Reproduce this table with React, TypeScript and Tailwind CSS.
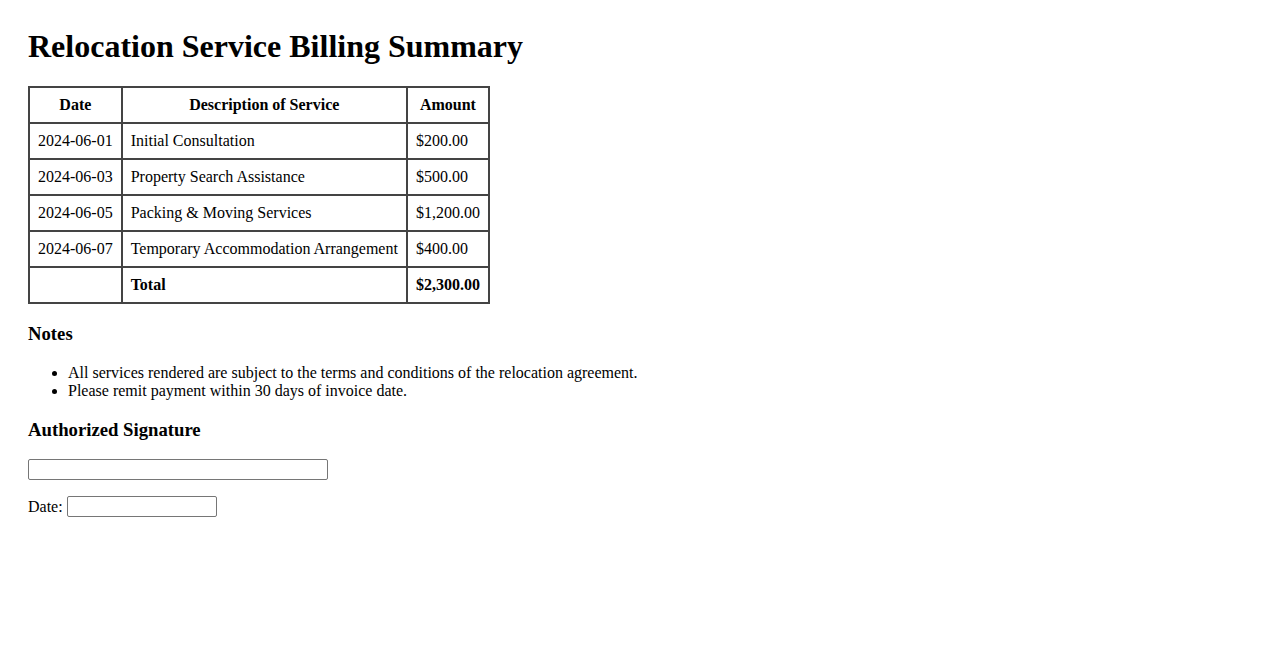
const rows = [
  { date: "2024-06-01", desc: "Initial Consultation", amount: "$200.00" },
  { date: "2024-06-03", desc: "Property Search Assistance", amount: "$500.00" },
  { date: "2024-06-05", desc: "Packing & Moving Services", amount: "$1,200.00" },
  { date: "2024-06-07", desc: "Temporary Accommodation Arrangement", amount: "$400.00" },
];

const cell = "border-2 border-[#444] px-2 py-2 leading-[18px]";

const App = () => {
  return (
    <div className="min-h-[650px] bg-white px-[28px] pt-[28px] font-['Liberation_Serif',serif] text-base text-black">
      <h1 className="mb-[21px] text-[32px] font-bold leading-[37px]">
        Relocation Service Billing Summary
      </h1>

      <table className="border-collapse border-2 border-[#444]">
        <thead>
          <tr>
            <th className={`${cell} text-center font-bold`}>Date</th>
            <th className={`${cell} text-center font-bold`}>Description of Service</th>
            <th className={`${cell} text-center font-bold`}>Amount</th>
          </tr>
        </thead>
        <tbody>
          {rows.map((r) => (
            <tr key={r.date}>
              <td className={cell}>{r.date}</td>
              <td className={cell}>{r.desc}</td>
              <td className={cell}>{r.amount}</td>
            </tr>
          ))}
          <tr>
            <td className={cell}></td>
            <td className={`${cell} font-bold`}>Total</td>
            <td className={`${cell} font-bold`}>$2,300.00</td>
          </tr>
        </tbody>
      </table>

      <h3 className="mt-[19px] mb-[19px] text-[18.72px] font-bold leading-[22px]">Notes</h3>
      <ul className="list-disc pl-10">
        <li className="leading-[18px]">
          All services rendered are subject to the terms and conditions of the relocation agreement.
        </li>
        <li className="leading-[18px]">Please remit payment within 30 days of invoice date.</li>
      </ul>

      <h3 className="mt-[19px] mb-[18px] text-[18.72px] font-bold leading-[22px]">
        Authorized Signature
      </h3>
      <input
        type="text"
        className="block h-[21px] w-[300px] rounded-[2px] border border-[#767676] px-[2px] text-[13px]"
      />
      <div className="mt-[16px] flex items-center gap-[4px]">
        <span className="leading-[18px]">Date:</span>
        <input
          type="text"
          className="h-[21px] w-[150px] rounded-[2px] border border-[#767676] px-[2px] text-[13px]"
        />
      </div>
    </div>
  );
};

export default App;
